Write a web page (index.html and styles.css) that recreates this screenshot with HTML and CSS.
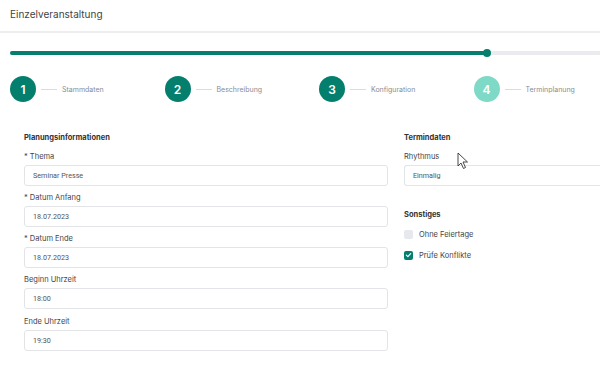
FILE: index.html
```html
<!DOCTYPE html>
<html lang="de">
<head>
    <meta charset="UTF-8">
    <title>Einzelveranstaltung</title>
    <link rel="stylesheet" href="styles.css">
</head>
<body>
    <div class="header">Einzelveranstaltung</div>

    <div class="progress">
        <div class="progress-fill"><span class="knob"></span></div>
    </div>

    <div class="steps">
        <div class="step"><span class="num">1</span><span class="dash"></span><span class="step-label">Stammdaten</span></div>
        <div class="step"><span class="num">2</span><span class="dash"></span><span class="step-label">Beschreibung</span></div>
        <div class="step"><span class="num">3</span><span class="dash"></span><span class="step-label">Konfiguration</span></div>
        <div class="step active"><span class="num">4</span><span class="dash"></span><span class="step-label">Terminplanung</span></div>
    </div>

    <div class="form">
        <div class="col">
            <h4>Planungsinformationen</h4>
            <div class="field">
                <label>* Thema</label>
                <input type="text" value="Seminar Presse">
            </div>
            <div class="field">
                <label>* Datum Anfang</label>
                <input type="text" value="18.07.2023">
            </div>
            <div class="field">
                <label>* Datum Ende</label>
                <input type="text" value="18.07.2023">
            </div>
            <div class="field">
                <label>Beginn Uhrzeit</label>
                <input type="text" value="18:00">
            </div>
            <div class="field">
                <label>Ende Uhrzeit</label>
                <input type="text" value="19:30">
            </div>
        </div>
        <div class="col col-right">
            <h4>Termindaten</h4>
            <div class="field">
                <label>Rhythmus</label>
                <input class="cut" type="text" value="Einmalig">
            </div>
            <h4 class="spaced">Sonstiges</h4>
            <div class="check"><span class="box"></span>Ohne Feiertage</div>
            <div class="check"><span class="box checked">
                <svg width="10" height="10" viewBox="0 0 10 10"><path d="M2.6 5.2 L4.3 6.8 L7.4 3.4" fill="none" stroke="#fff" stroke-width="1.3" stroke-linecap="round" stroke-linejoin="round"/></svg>
            </span>Prüfe Konflikte</div>
        </div>
    </div>

    <svg class="cursor" width="12" height="18" viewBox="0 0 12 18">
        <path d="M1 1 L1 14 L4 11 L6.5 16.5 L8.5 15.5 L6 10 L10.5 10 Z" fill="#fff" stroke="#333" stroke-width="0.9" stroke-linejoin="round"/>
    </svg>
</body>
</html>
```

FILE: styles.css
```css
body {
    font-family: 'Inter', 'Noto Sans', sans-serif;
    background: #fff;
    margin: 0;
    padding: 0;
    width: 600px;
    height: 388px;
    overflow: hidden;
    position: relative;
    color: #333;
}
.header {
    height: 31px;
    line-height: 29px;
    padding-left: 10px;
    font-size: 10px;
    color: #444;
    border-bottom: 2px solid #eeeeee;
}
.progress {
    margin: 18px 0 0 10px;
    height: 4px;
    background: #e9ebef;
    border-radius: 2px 0 0 2px;
}
.progress-fill {
    position: relative;
    width: 477px;
    height: 4px;
    background: #047f6e;
    border-radius: 2px;
}
.knob {
    position: absolute;
    right: -4px;
    top: -2px;
    width: 8px;
    height: 8px;
    border-radius: 50%;
    background: #047f6e;
}
.steps {
    display: flex;
    margin: 21px 0 0 10px;
}
.step {
    width: 154.5px;
    display: flex;
    align-items: center;
}
.step.active {
    width: 117px;
}
.num {
    width: 26px;
    height: 26px;
    border-radius: 50%;
    background: #047f6e;
    color: #fff;
    font-size: 12px;
    font-weight: 600;
    display: flex;
    align-items: center;
    justify-content: center;
}
.step.active .num {
    background: #7edac6;
}
.dash {
    width: 16px;
    height: 1px;
    background: #d8dbe0;
    margin: 0 5px 0 5px;
}
.step-label {
    font-size: 7px;
    color: #8a8c93;
}
.form {
    display: flex;
    gap: 16px;
    padding-left: 24px;
    margin-top: 29.5px;
}
.col {
    width: 364px;
}
.col-right {
    width: 196px;
}
h4 {
    margin: 0 0 7px 0;
    font-size: 7.5px;
    font-weight: 700;
    line-height: 12px;
    color: #333;
}
h4.spaced {
    margin-top: 23.5px;
    margin-bottom: 8px;
}
.field {
    margin-bottom: 6.25px;
}
label {
    display: block;
    font-size: 7.5px;
    line-height: 12px;
    color: #444;
    margin-bottom: 2px;
}
input {
    display: block;
    box-sizing: border-box;
    width: 100%;
    height: 21px;
    margin: 0;
    padding: 0 8px;
    border: 1px solid #e2e4e8;
    border-radius: 3px;
    font-family: 'Roboto', 'Liberation Sans', sans-serif;
    font-size: 7.2px;
    color: #555;
    background: #fff;
}
input.cut {
    border-right: none;
    border-radius: 3px 0 0 3px;
}
.check {
    display: flex;
    align-items: center;
    height: 10px;
    margin-bottom: 11px;
    font-size: 7.5px;
    color: #444;
}
.box {
    width: 9px;
    height: 9px;
    border-radius: 2px;
    background: #e6e8ee;
    margin-right: 6px;
    display: flex;
    align-items: center;
    justify-content: center;
}
.box.checked {
    background: #047f6e;
}
.cursor {
    position: absolute;
    left: 457px;
    top: 152px;
}
```
